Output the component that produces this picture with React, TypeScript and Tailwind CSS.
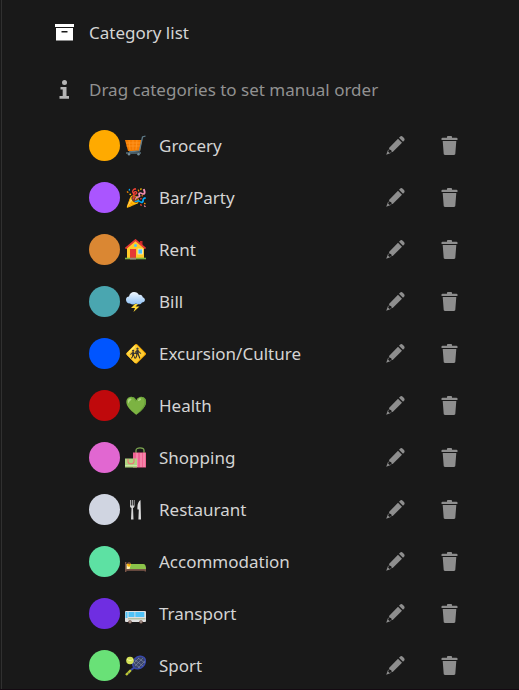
import type { ReactNode } from 'react';

function Svg({ children, size = 'size-[21px]', box = '0 0 21 21' }: { children: ReactNode; size?: string; box?: string }) {
  return <svg viewBox={box} className={`${size} block shrink-0`} fill="none" aria-hidden="true">{children}</svg>;
}

const Cart = () => (
  <Svg>
    <path d="M0 5h17l-2 11H3z" fill="#f57c00" />
    <path d="M1 8h15M1.500 11h14M4 5l1 10M8 5v10M12 5l-1 10" stroke="#ff9826" strokeWidth=".8" />
    <path d="M20.500 1l-3 1-3 14L4 16.800" stroke="#607d8b" strokeWidth="1.300" />
    <path d="M1 18h15" stroke="#607d8b" strokeWidth="1.300" />
    <circle cx="4" cy="19.300" r="1.200" fill="#78909c" /><circle cx="13.500" cy="19.300" r="1.200" fill="#78909c" />
  </Svg>
);

const House = () => (
  <Svg>
    <path d="M2 9l8.500-8L19 9v10H2z" fill="#ffca28" />
    <path d="M15 2h2.500v5L15 5z" fill="#c62828" />
    <path d="M.500 9.500L10.500 1l10 8.500" stroke="#e53935" strokeWidth="1.700" />
    <rect x="5" y="10" width="6" height="9" fill="#e53935" />
    <rect x="13" y="10" width="4.500" height="5" fill="#4fc3f7" stroke="#fff3c4" strokeWidth=".8" />
    <circle cx="10.500" cy="6.500" r="1.500" fill="#4fc3f7" />
    <path d="M0 19.500h21" stroke="#7cb342" strokeWidth="1.600" /><path d="M5 19h6v1.500H5z" fill="#a1887f" />
  </Svg>
);

const Storm = () => (
  <Svg>
    <defs><linearGradient id="cloud" x2="0" y2="1"><stop stopColor="#f1f8ff" /><stop offset="1" stopColor="#90c2f5" /></linearGradient></defs>
    <path d="M5 12.500C2 12.500 1 10.500 1 8.500s1.500-3 3-3C4.500 2.500 6.500 1 9 1c2.500 0 4 1 5 3 2-.5 3.500.5 3.700 2.200 3.300 1 2.800 5.300-.7 5.300-1 2-4 2.500-6 1-2 1.300-4 1.300-6 0z" fill="url(#cloud)" />
    <path d="M10 13l-4 4h4l-1.500 4 6-5.500h-4L13 13z" fill="#fdd835" />
  </Svg>
);

const Bags = () => (
  <Svg>
    <path d="M11 6V3.500C11 0 19 0 19 3.500V6" stroke="#7da651" strokeWidth="1.300" />
    <path d="M8 5.500h13v15H8z" fill="#f06292" /><path d="M12 6v14M16 6v14M19 6v14" stroke="#f8a5bf" strokeWidth="1" />
    <path d="M0 11.500h12v9H0z" fill="#aed581" /><path d="M3 12v2.500c0 3 6 3 6 0V12" stroke="#e97c77" strokeWidth="1.200" />
    <path d="M0 18.500h12" stroke="#d4e8b5" strokeWidth=".8" />
  </Svg>
);

const Cutlery = () => (
  <Svg>
    <path d="M5 1v6c0 1 .7 1.800 1.500 2L6 20.500h2.500L8 9c.8-.2 1.500-1 1.500-2V1l-.7 0v5.500H7.700V1h-.9v5.500h-1V1z" fill="#d5d5d5" />
    <path d="M15.500 1c-2 1-3.500 4.500-3 9.500h1.300l-.4 10H16z" fill="#dedede" />
  </Svg>
);

const Bed = () => (
  <Svg>
    <path d="M.700 11v10M20.300 16v4.500" stroke="#795548" strokeWidth="1.400" />
    <path d="M0 18h21v1.800H0z" fill="#795548" />
    <path d="M1.500 13h5v5h-5z" fill="#fff0b5" /><circle cx="4" cy="13.800" r="2" fill="#ffb300" /><path d="M2 12l2-1 2 1-1.500 1.500z" fill="#6d4c41" />
    <path d="M6 13h12.500c1.500 0 2.500 1.500 2.500 5H4.500z" fill="#8bc34a" />
  </Svg>
);

const Bus = () => (
  <Svg>
    <rect x="0" y="8" width="21" height="11" rx="1" fill="#e0e0e0" />
    <rect x=".5" y="9" width="2" height="6" fill="#4fc3f7" /><rect x="3.500" y="9" width="6" height="5" fill="#4fc3f7" />
    <rect x="10.300" y="9" width="9" height="5" fill="#4fc3f7" />
    <path d="M3 15.800h17.500" stroke="#8caa72" strokeWidth=".8" />
    <circle cx="5" cy="19" r="1.800" fill="#6d4c41" /><circle cx="16" cy="19" r="1.800" fill="#6d4c41" />
    <circle cx="5" cy="19" r=".8" fill="#ccc" /><circle cx="16" cy="19" r=".8" fill="#ccc" />
  </Svg>
);

const Racket = () => (
  <Svg>
    <path d="M1 20l5-5" stroke="#c0ca33" strokeWidth="2.400" /><path d="M3 17.500l1.500 1.500" stroke="#455a64" />
    <path d="M6 15l4-3" stroke="#3949ab" strokeWidth="2" />
    <ellipse cx="14" cy="7.500" rx="7" ry="5.500" transform="rotate(-45 14 7.500)" fill="#3b4569" stroke="#3949ab" strokeWidth="1.600" />
    <path d="M9 8l6 5M10 5l8 6M13 3l7 5M10 11l8-8M13 13l7-7M9 8l5-5" stroke="#8790ad" strokeWidth=".6" />
    <circle cx="5" cy="5.500" r="3.800" fill="#d4e157" /><path d="M2 4c2 2 4 2 6 .5" stroke="#f5ffad" strokeWidth=".8" />
  </Svg>
);

const Emoji = ({ children }: { children: string }) => <span className="text-[18px] leading-[21px]">{children}</span>;

const categories: { name: string; color: string; icon: ReactNode }[] = [
  { name: 'Grocery', color: 'bg-[#ffaa00]', icon: <Cart /> },
  { name: 'Bar/Party', color: 'bg-[#aa55ff]', icon: <Emoji>🎉</Emoji> },
  { name: 'Rent', color: 'bg-[#da8733]', icon: <House /> },
  { name: 'Bill', color: 'bg-[#4aa6b0]', icon: <Storm /> },
  { name: 'Excursion/Culture', color: 'bg-[#0055ff]', icon: <Emoji>🚸</Emoji> },
  { name: 'Health', color: 'bg-[#bf090c]', icon: <Emoji>💚</Emoji> },
  { name: 'Shopping', color: 'bg-[#e167d1]', icon: <Bags /> },
  { name: 'Restaurant', color: 'bg-[#d0d5e1]', icon: <Cutlery /> },
  { name: 'Accommodation', color: 'bg-[#5de1a3]', icon: <Bed /> },
  { name: 'Transport', color: 'bg-[#6f2ee1]', icon: <Bus /> },
  { name: 'Sport', color: 'bg-[#69e177]', icon: <Racket /> },
];

const Pencil = () => (
  <Svg size="size-[19px]" box="0 0 19 19">
    <path d="M13 1.700l1-1c.8-.8 2-.8 2.700 0l1.300 1.300c.8.800.8 2 0 2.700l-1 1z" fill="#8e8e8e" />
    <path d="M12 2.700l4 4-9.300 9.300-1.200-.2-.3-1.700-1.800-.4-.4-1.700z" fill="#8e8e8e" />
    <path d="M2.200 13.500L.200 18.800l5.300-2z" fill="#8e8e8e" />
    <path d="M2.800 13.800l2 .5.400 2-1.700.7-1.400-1.400z" fill="#191919" />
  </Svg>
);

const Trash = () => (
  <Svg size="size-[19px]" box="0 0 19 19">
    <path d="M7 1c0-.7.500-1 1-1h3c.5 0 1 .3 1 1v.7h4.500c.6 0 1 .3 1 .8v1.500h-16V2.500c0-.5.400-.8 1-.8H7z" fill="#8e8e8e" />
    <path d="M2.700 5h13.600l-1 12.800c0 .7-.5 1.200-1.200 1.200H4.900c-.7 0-1.200-.5-1.200-1.200z" fill="#8e8e8e" />
  </Svg>
);

export default function App() {
  return (
    <div className="h-screen overflow-hidden border-b border-[#140a12] bg-[#191919] pl-px font-['Noto_Sans',sans-serif] text-[17px] leading-6 text-[#d4d4d4]">
      <main className="min-h-full border-l border-[#303030] pt-1 pr-[43px]">
        <header className="flex h-14 items-center pl-[52px]">
          <Svg size="h-[17px] w-[21px]" box="0 0 21 17">
            <path d="M1 0h19v3H1z" fill="#fff" />
            <path fillRule="evenodd" d="M2 4h17v12.500H2zM7.500 7v1.500h6V7z" fill="#fff" />
          </Svg>
          <h1 className="pt-px pl-[14px]">Category list</h1>
        </header>
        <p className="flex h-[59px] items-center pl-[52px] text-[#919191]">
          <Svg size="h-[19px] w-[21px]" box="0 0 21 19">
            <circle cx="10.500" cy="2.500" r="2.500" fill="#b5b5b5" />
            <path d="M6.500 7h6v9h2.500v2.800H5.500V16h3.200V9.500H6.500z" fill="#b5b5b5" />
          </Svg>
          <span className="pl-[14px]">Drag categories to set manual order</span>
        </p>
        <ul className="pl-[87px]">
          {categories.map((c) => (
            <li key={c.name} className="flex h-[52px] items-center">
              <button type="button" aria-label={`Change colour of ${c.name}`} className={`size-[31px] shrink-0 rounded-full ${c.color}`} />
              <span className="ml-[5px] flex w-[34px] shrink-0 items-center">{c.icon}</span>
              <span className="flex-1 pt-px">{c.name}</span>
              <button type="button" aria-label={`Edit ${c.name}`} className="flex w-[54px] justify-center"><Pencil /></button>
              <button type="button" aria-label={`Delete ${c.name}`} className="flex w-[54px] justify-center pl-px"><Trash /></button>
            </li>
          ))}
        </ul>
      </main>
    </div>
  );
}
